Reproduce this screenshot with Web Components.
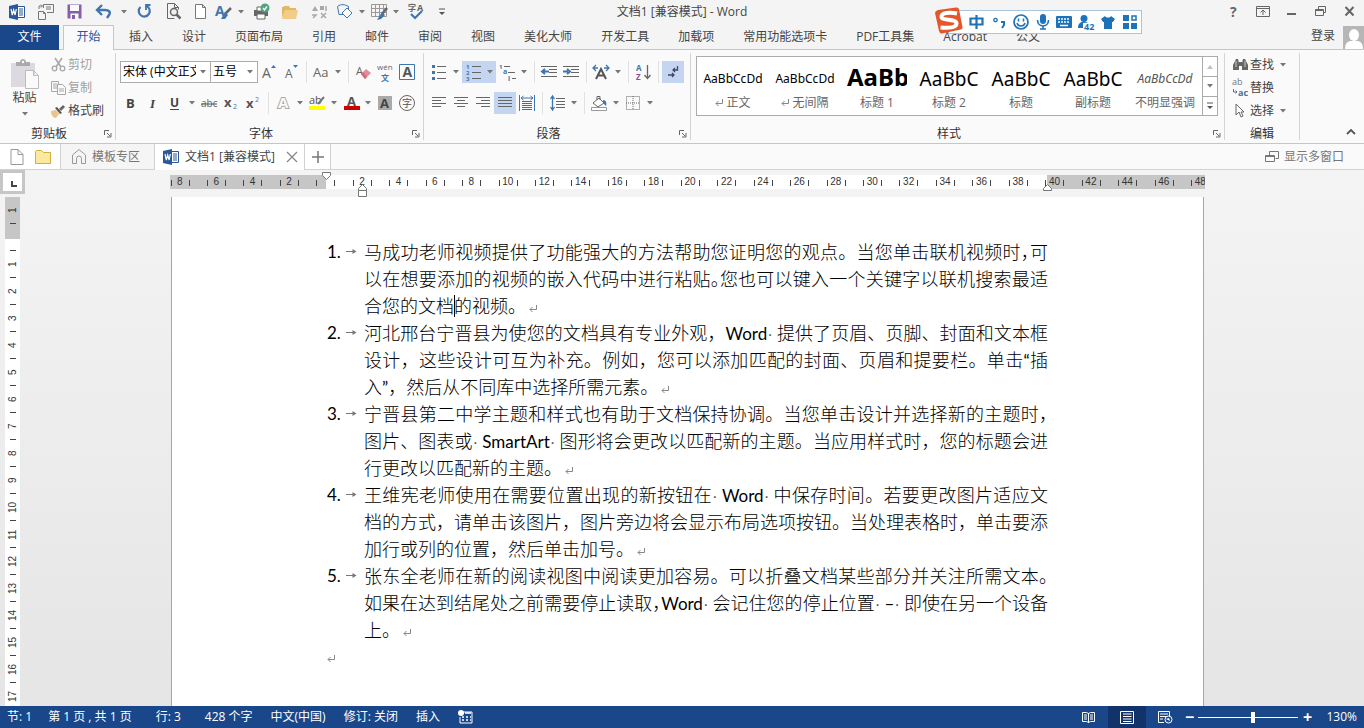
<!DOCTYPE html>
<html lang="zh-CN">
<head>
<meta charset="utf-8">
<title>文档1 [兼容模式] - Word</title>
<style>
html,body{height:100%;margin:0}
body{font:12px/16px "Open Sans","Noto Sans CJK SC",sans-serif;color:#444;background:#f4f4f4;overflow:hidden}
</style>
</head>
<body>
<word-app></word-app>
<script>
const B='#3f76ae',G='#666',L='#a8a8a8';
const lines=(list,c=G)=>list.map(([x,y,w])=>`<path d="M${x} ${y}h${w}" stroke="${c}" fill="none"/>`).join('');
const T=(x,y,s,t,c=G,extra='')=>`<text x="${x}" y="${y}" font-size="${s}" fill="${c}" ${extra}>${t}</text>`;
const bold='font-weight="700"';
const ICONS={
word:[16,16,`<path d="M9 2.500h6.500v11H9" fill="#fff" stroke="#2a579a"/><path d="M10 5h4M10 7h4M10 9h4M10 11h4" stroke="#2a579a"/><path d="M0 2l9-2v16l-9-2z" fill="#2a579a"/><path d="M2 5l1.300 6L4.700 6l1.400 5L7.300 5" fill="none" stroke="#fff" stroke-width="1.200"/>`],
touch:[18,18,`<path d="M1.500 8.500h5l2 2v6h-7zM6.500 8.500v2h2" fill="none" stroke="#777"/><path d="M6.500 5V1.500h10v8H10M9 4h5M9 6h5" fill="none" stroke="#777"/><path d="M2 6V3h3M4 1.500L5.500 3 4 4.500" fill="none" stroke="#777"/>`],
save:[15,15,`<path d="M.5.5h14v14H.5z" fill="#8560a8"/><path d="M3 1h9v6H3z" fill="#f8f8f8"/><path d="M3.500 9.500h8V15h-8z" fill="#f8f8f8"/><path d="M5 11h3v4H5z" fill="#8560a8"/>`],
undo:[16,14,`<path d="M2 5h7c4 0 6 2 4 5l-2 3" fill="none" stroke="${B}" stroke-width="2.400"/><path d="M6 0L1 5l5 5" fill="none" stroke="${B}" stroke-width="2.400"/>`],
redo:[15,15,`<path d="M3.500 3a5.500 5.500 0 1 0 6-1" fill="none" stroke="${B}" stroke-width="2.200"/><path d="M13.500 1H9v5" fill="none" stroke="${B}" stroke-width="1.800"/>`],
preview:[16,17,`<path d="M1.500.5h7l4 4v2M1.500.5v15h7M8.500.5v4h4" fill="none" stroke="${G}"/><circle cx="8" cy="9" r="3.500" fill="#eee" stroke="${G}" stroke-width="1.500"/><path d="M10.500 11.500l4 4" stroke="${G}" stroke-width="2.500"/>`],
page:[12,15,`<path d="M.5.5h7l3 3v11H.5zM7.500.5v3h3" fill="#fff" stroke="#777"/>`],
brushA:[18,17,T(0,13,14,'A',B,bold)+`<path d="M16 5l-6 6" stroke="${G}" stroke-width="2.500"/><path d="M10 9l3 3-3 4-4 0z" fill="${B}"/>`],
printer:[18,17,`<path d="M1 7h14v6H1z" fill="#666"/><path d="M4 4h6v4H4zM4 11h8v5H4z" fill="#fff" stroke="#666"/><circle cx="12" cy="5" r="4.500" fill="#4fa37f"/><path d="M10 5l1.500 2L14 3.500" fill="none" stroke="#fff" stroke-width="1.300"/>`],
folder:[17,14,`<path d="M0 2h1l1-1h5l1 2h6v3H3l-3 7z" fill="#e2b868"/><path d="M3 5h13l-2 9H0z" fill="#f0cd88"/>`],
shapesg:[16,14,`<path d="M0 6l3-5 3 5z" fill="${L}"/><path d="M8 1h4v4H8z" fill="${L}"/><path d="M14 1v5M0 10h4l-3 3M9 8l5 5M14 8l-5 5" fill="none" stroke="${L}" stroke-width="1.500"/>`],
shapes:[17,15,`<path d="M.5 2.500c4-3 7-2 11 0v8H2z" fill="none" stroke="${B}"/><path d="M5 9l5-5 5 5-5 5z" fill="#fff" stroke="${B}"/>`],
grid:[17,16,`<path d="M.5.5h15v12H.5zM.5 4.500h15M.5 8.500h15M4.500.5v12M8.500.5v12M12.500.5v12" fill="none" stroke="#999"/><path d="M16 4l-5 6" stroke="${G}" stroke-width="2.500"/><path d="M11 8l3 3-4 4-4 1z" fill="${B}"/>`],
spell:[17,17,T(0,8,8,'字',G,bold)+T(9,8,9,'A',G,bold)+`<path d="M3 11l4 4 7-7" fill="none" stroke="${B}" stroke-width="2.200"/>`],
more:[8,8,`<path d="M1 1h6" stroke="#555"/><path d="M1 4h6l-3 3z" fill="#555"/>`],
caret:[6,4,`<path d="M0 0h6L3 3.500z" fill="#777"/>`],
caretUp:[6,4,`<path d="M0 4h6L3 0z" fill="#c0c0c0"/>`],
help:[12,14,T(2,12,14,'?','#666',bold)],
opts:[14,12,`<path d="M.5.5h13v10H.5zM.5 2.500h13M7 9V4M4.500 6.500L7 4l2.500 2.500" fill="none" stroke="${G}"/>`],
min:[10,12,`<path d="M0 8h9" stroke="${G}" stroke-width="2"/>`],
restore:[12,11,`<path d="M3.500 3V.5h7v6H9M.5 3.500h8v6h-8zM.5 4.500h8" fill="none" stroke="${G}"/>`],
close:[12,11,`<path d="M1.500 1l8 8.500M9.500 1l-8 8.500" stroke="${G}" stroke-width="2"/>`],
user:[21,23,`<path d="M0 0h21v23H0z" fill="#b6b6b6"/><ellipse cx="11" cy="9" rx="5" ry="6" fill="#fff"/><path d="M2 23c0-6 3-8 6-8h6c3 0 6 2 6 8z" fill="#fff"/>`],
paste:[28,31,`<path d="M0 4h24v24H0z" fill="#ddd9e0"/><path d="M5 7V3h4c0-4 6-4 6 0h4v4z" fill="#aaa"/><circle cx="12" cy="3" r="1.200" fill="#fff"/><path d="M14.500 11.500h8l5 5v13h-13zM22.500 11.500v5h5" fill="#fafafa" stroke="#bbb"/>`],
cut:[15,15,`<path d="M4 1l6 9M11 1L5 10" stroke="${L}" stroke-width="1.600"/><circle cx="3.500" cy="11.500" r="2.300" fill="none" stroke="${L}" stroke-width="1.300"/><circle cx="11.500" cy="11.500" r="2.300" fill="none" stroke="${L}" stroke-width="1.300"/>`],
copy:[15,14,`<path d="M.5.5h7v10h-7zM2 3h4M2 5h4M2 7h4" fill="none" stroke="${L}"/><path d="M6.500 3.500h5l3 3v7h-8z" fill="#fafafa" stroke="${L}"/><path d="M8 8h5M8 10h5" stroke="${L}"/>`],
painter:[16,14,`<path d="M1 7l5-1 3 4-3 4c-3 0-5-3-5-7z" fill="#ecc38a"/><path d="M5 4l5 6 2-1-5-6z" fill="#555"/><path d="M9 5l4-4 2 2-4 4z" fill="${G}"/>`],
grow:[14,14,T(0,13,14,'A')+`<path d="M9 3l2.500-3L14 3z" fill="${B}"/>`],
shrink:[14,14,T(1,13,12,'A')+`<path d="M9 0h5l-2.500 3z" fill="${B}"/>`],
Aa:[16,14,T(0,12,13,'Aa')],
eraser:[15,15,T(0,10,11,'A')+`<path d="M5 9l5-5 5 4-6 6z" fill="#e58b9b"/><path d="M5 9l2-2 4 5-2 2z" fill="#d5687e"/>`],
wen:[16,17,T(0,6,8,'wén')+T(4,17,8,'文',B,bold)],
boxA:[16,16,`<path d="M.5.5h15v15H.5z" fill="none" stroke="${B}"/>`+T(3.5,13,14,'A','#555',bold)],
B:[12,14,T(1,12,13,'B','#444',bold)],
I:[12,14,T(3,12,13,'I','#444','font-style="italic" font-family="Liberation Serif" font-weight="700"')],
U:[12,15,T(1,11,12,'U','#444',bold)+`<path d="M1 13.500h9" stroke="#444"/>`],
abc:[17,14,T(0,11,10,'abc')+`<path d="M0 8h16" stroke="#555"/>`],
sub:[14,14,T(0,11,13,'x','#555',bold)+T(9,13,7,'2',B)],
sup:[14,14,T(0,12,13,'x','#555',bold)+T(9,6,7,'2',B)],
outA:[14,16,T(2,13,15,'A','#fafafa','stroke="#aaa" font-weight="700" paint-order="stroke" stroke-width="2"')],
mark:[18,16,T(1,9,11,'ab','#555')+`<path d="M16 2l-6 7" stroke="#777" stroke-width="2"/><path d="M1 11h16v4H1z" fill="#ffff00"/>`],
colorA:[17,16,T(4,11,13,'A','#555',bold)+`<path d="M1 11h16v4H1z" fill="#d00000"/>`],
shadeA:[14,15,`<path d="M0 0h14v14H0z" fill="#aaa"/>`+T(2,12,13,'A','#444',bold)],
ring:[16,16,`<circle cx="8" cy="8" r="7.500" fill="none" stroke="#666"/>`+T(3,12,10,'字','#555')],
bullets:[14,16,lines([[5,2.5,9],[5,8.5,9],[5,14.5,9]])+`<path d="M0 1h3v3H0zM0 7h3v3H0zM0 13h3v3H0z" fill="${B}"/>`],
numbers:[15,17,lines([[6,2.5,9],[6,8.5,9],[6,14.5,9]])+T(0,5,6,'1',B,bold)+T(0,11,6,'2',B,bold)+T(0,17,6,'3',B,bold)],
multi:[17,17,lines([[5,2.5,6],[9,8.5,7],[13,14.5,4]])+T(0,5,6,'1',B,bold)+T(4,10,7,'a',B,bold)+T(9,17,7,'i',B,bold)],
outdent:[16,12,lines([[0,.5,16],[8,3.5,8],[8,6.5,8],[0,10.500,16]])+`<path d="M8 5.500H2M4 3L1 5.500 4 8" fill="none" stroke="${B}" stroke-width="2"/>`],
indent:[16,12,lines([[0,.5,16],[8,3.5,8],[8,6.5,8],[0,10.500,16]])+`<path d="M0 5.500h5M4 3l3 2.500L4 8" fill="none" stroke="${B}" stroke-width="2"/>`],
wideA:[18,15,`<path d="M4 14L9 4l5 10M6 10.500h6" fill="none" stroke="#555" stroke-width="2"/><path d="M1 3h5M12 3h5M4 0L1 3l3 3M14 0l3 3-3 3" fill="none" stroke="${B}" stroke-width="1.300"/>`],
sort:[15,16,T(0,7,8,'A',B,bold)+T(0,16,8,'Z','#8a4fa0',bold)+`<path d="M11.500 1v13M8.500 11l3 3.500 3-3.500" fill="none" stroke="${G}" stroke-width="1.300"/>`],
marks:[12,14,`<path d="M10.500 1v4H6M8 3L6 5l2 2M1 10h6M5 8l2 2-2 2" fill="none" stroke="#446" stroke-width="1.300"/>`],
left:[15,12,lines([[0,.5,14],[0,3.5,9],[0,6.5,14],[0,9.5,9]])],
center:[15,12,lines([[0,.5,14],[3,3.5,8],[0,6.5,14],[3,9.5,8]])],
right:[15,12,lines([[0,.5,14],[5,3.5,9],[0,6.5,14],[5,9.5,9]])],
just:[15,12,lines([[0,.5,14],[0,3.5,14],[0,6.5,14],[0,9.5,14]])],
dist:[16,16,lines([[3,6.500,10],[3,8.500,10],[3,10.500,10],[3,12.500,10],[3,14.500,10]])+`<path d="M.5 0v16M15.500 0v16M2 3h12M4.500 1L2 3l2.500 2M11.500 1L14 3l-2.500 2" fill="none" stroke="${B}"/>`],
spacing:[15,16,lines([[6,3.500,9],[6,6.5,9],[6,9.5,9],[6,12.500,9]])+`<path d="M2.500 1v14M.5 4l2-3 2 3M.5 12l2 3 2-3" fill="none" stroke="${B}" stroke-width="1.300"/>`],
bucket:[17,16,`<path d="M2 8l6-5 5 5-6 4z" fill="#fff" stroke="${G}"/><path d="M6 5V1.500h3V5" fill="none" stroke="${G}"/><path d="M12 5c3 0 4 3 3 6l-3-3z" fill="${B}"/><path d="M.5 12.500h15v3H.5z" fill="#fff" stroke="#999"/>`],
border:[14,14,`<path d="M.5.5h13v13H.5zM7 0v14M0 7h14" fill="none" stroke="${G}" stroke-dasharray="1 1"/>`],
find:[15,13,`<path d="M1 5l2-4h2l1 4v7H0V7zM9 5l1-4h2l2 4 1 2v5H9z" fill="${G}"/><path d="M6 4h3v4H6z" fill="${G}"/><path d="M3 3v6M12 3v6" stroke="#ccc"/>`],
replace:[17,17,T(0,6,9,'ab','#777')+T(6,17,9,'ac','#4a6f94',bold)+`<path d="M1.500 10v3H5M3.500 11.500L5 13l-1.500 1.500" fill="none" stroke="${B}"/>`],
pointer:[10,15,`<path d="M1 1v11l3-3 2 5 2-1-2-4h3z" fill="#fff" stroke="${G}"/>`],
launch:[8,8,`<path d="M.5 5V.5H5M3 3l3 3M7 3v4H3" fill="none" stroke="${G}"/>`],
up:[10,6,`<path d="M1 5l4-4 4 4" fill="none" stroke="#555" stroke-width="1.800"/>`],
dpage:[14,16,`<path d="M1 .5h7l5 5v10H1zM8 .5v5h5" fill="#fff" stroke="#999"/>`],
dfolder:[17,14,`<path d="M.5 1.500l1-1h5l2 2h7v11H.5z" fill="#fbe9a0" stroke="#d7ad41"/>`],
home:[14,15,`<path d="M.5 6L7 .5 13.500 6v8.500h-4v-5a2.500 2.500 0 0 0-5 0v5h-4z" fill="none" stroke="#999"/>`],
x:[12,12,`<path d="M1 1l10 10M11 1L1 11" stroke="#888" stroke-width="1.300"/>`],
plus:[12,12,`<path d="M6 0v12M0 6h12" stroke="#777" stroke-width="1.500"/>`],
cascade:[14,12,`<path d="M4.500 4V.5h9v7h-3M.5 4.500h9v6h-9zM.5 5.500h9" fill="none" stroke="#777"/>`],
ret:[8,9,`<path d="M7.500 1v4.500H1M3.500 3L1 5.500 3.500 8" fill="none" stroke="#888"/>`],
tab:[11,7,`<path d="M0 3.500h8" stroke="#777"/><path d="M6.500 1l4 2.500-4 2.500z" fill="#777"/>`],
slot:[15,14,`<path d="M4 2h10v11H2V7" fill="none" stroke="#fff"/><circle cx="3" cy="3" r="3" fill="#fff"/><path d="M7 3h6M4 7h2M8 7h2M12 7h1M4 10h2M8 10h2M12 10h1" stroke="#fff" stroke-width="1.500"/>`],
read:[14,13,`<path d="M6.500 2.500l-2-1h-4v9h4l2 1 2-1h4v-9h-4zM6.500 2v10M2 4h3M2 6h3M2 8h3M8 4h3M8 6h3M8 8h3" fill="none" stroke="#fff"/>`],
print:[15,13,`<path d="M.5.5h13v12H.5zM3 3h8.500M3 5.500h8.500M3 8h8.500M3 10.500h8.500" fill="none" stroke="#fff"/>`],
web:[15,13,`<path d="M6 11.500H.5V.5h11V5M2 3h8M2 5.500h6M2 8h3" fill="none" stroke="#fff"/><circle cx="10.500" cy="8.500" r="3.500" fill="#19478a" stroke="#fff"/><path d="M8 8l3-1 1 3z" fill="#fff"/>`],
sogou:[28,27,`<path d="M3 3Q0 4 0 6L4 24Q5 27 7 26.500L26 22.500Q28 22 27.500 20L24 2Q23 0 21 .5z" fill="#e4572b"/><path d="M22 6.500C15 5 6 5.500 6.500 10c.5 4 15 1.500 15 6.500 0 4.500-8 4.500-16 4" fill="none" stroke="#fff" stroke-width="4"/>`],
zhong:[16,16,`<path d="M1.500 4.500h12v6h-12zM7.500 1v14" fill="none" stroke="#1e73b8" stroke-width="2.200"/>`],
punct:[14,14,`<circle cx="3.500" cy="5" r="1.700" fill="none" stroke="#1e73b8" stroke-width="1.300"/><path d="M9 7h3v3l-2 3" fill="none" stroke="#1e73b8" stroke-width="2"/>`],
smile:[16,16,`<circle cx="8" cy="8" r="7" fill="none" stroke="#1e73b8" stroke-width="1.700"/><path d="M5.500 4.500v3M10.500 4.500v3M4 9c1 4 7 4 8 0" fill="none" stroke="#1e73b8" stroke-width="1.500"/>`],
mic:[14,16,`<rect x="4" y="0" width="6" height="10" rx="3" fill="#1e73b8"/><path d="M1.500 6c0 8 11 8 11 0M7 12v3M4 15h6" fill="none" stroke="#1e73b8" stroke-width="1.600"/>`],
keys:[16,12,`<rect width="16" height="12" rx="1" fill="#1e73b8"/><path d="M2 3h12M2 6h12" stroke="#fff" stroke-width="1.500" stroke-dasharray="2 1"/><path d="M4 9.500h8" stroke="#fff" stroke-width="1.500"/>`],
person:[17,15,`<circle cx="6" cy="3.500" r="3.500" fill="#1e73b8"/><path d="M0 13c0-6 4-7 11-5v5z" fill="#1e73b8"/><path d="M5 8h12v7H5z" fill="#fff"/>`+T(6,15,9,'42','#1e73b8',bold)],
shirt:[14,13,`<path d="M0 3l4-3c1 2 5 2 6 0l4 3-2 3h-1v7H3V6H2z" fill="#1e73b8"/>`],
tiles:[14,14,`<path d="M0 0h6v6H0zM0 8h6v6H0zM8 8h6v6H8z" fill="#1e73b8"/><path d="M9 1h4v4H9z" fill="none" stroke="#1e73b8" stroke-width="1.500"/>`]
};
const define=(tag,css,html)=>customElements.define(tag,class extends HTMLElement{
  connectedCallback(){
    if(this.shadowRoot)return;
    const root=this.attachShadow({mode:'open'}),t=document.createElement('template');
    t.innerHTML=`<style>*{box-sizing:border-box}button{font:inherit;color:inherit;background:none;border:0;padding:0;margin:0}${css}</style>`+(typeof html==='function'?html(this):html);
    root.append(t.content.cloneNode(true));
  }
});
const icon=n=>`<w-icon name="${n}"></w-icon>`;

define('w-icon',`:host{display:inline-flex;flex:none}svg{display:block;overflow:visible;font-family:"Open Sans","Noto Sans CJK SC",sans-serif}`,e=>{
  const [w,h,s]=ICONS[e.getAttribute('name')];
  return `<svg width="${w}" height="${h}" viewBox="0 0 ${w} ${h}" aria-hidden="true">${s}</svg>`;
});
define('tool-button',`:host{display:flex;height:22px;flex:none}
button{display:flex;align-items:center;height:100%}
.i{width:var(--cell,22px);display:flex;justify-content:center}.c{width:12px;display:flex;justify-content:center}
:host([active]) button{background:#c3d5f0}`,
  e=>`<button aria-label="${e.getAttribute('icon')}"><span class="i">${icon(e.getAttribute('icon'))}</span>${e.hasAttribute('caret')?`<span class="c">${icon('caret')}</span>`:''}</button>`);
define('label-button',`:host{display:flex;height:23px}button{display:flex;align-items:center}.i{width:18px;display:flex;justify-content:center;margin-right:1px}.c{margin-left:6px;display:flex}:host([dim]){color:#a0a0a0}`,
  e=>`<button><span class="i">${icon(e.getAttribute('icon'))}</span><slot></slot>${e.hasAttribute('caret')?`<span class="c">${icon('caret')}</span>`:''}</button>`);
define('tool-gap',`:host{display:flex;width:8px;height:22px;justify-content:center;flex:none}i{width:1px;background:#e1e1e1}`,'<i></i>');
const tb=(n,o='')=>`<tool-button icon="${n}" ${o}></tool-button>`;
const gap='<tool-gap></tool-gap>';

define('title-bar',`:host{display:flex;height:25px;align-items:center;padding:0 0 2px 2px;position:relative;background:#f4f4f4;--cell:29px}
.q{display:flex;flex:none;align-items:center}.n{--cell:22px}.m{--cell:25px}
h1{position:absolute;left:0;right:0;top:4px;margin:0;text-align:center;font:12px/16px "Open Sans","Noto Sans CJK SC",sans-serif;pointer-events:none}
.w{margin-left:auto;display:flex}`,
`<div class="q">${tb('word')}${tb('touch')}${tb('save')}${tb('undo','caret')}${tb('redo')}${tb('preview')}<div class="q m">${tb('page')}</div><div class="q n">${tb('brushA','caret')}</div>${tb('printer')}${tb('folder')}${tb('shapesg')}<div class="q n">${tb('shapes','caret')}${tb('grid','caret')}</div>${tb('spell')}<div class="q n">${tb('more')}</div></div>
<h1>文档1 [兼容模式] - Word</h1>
<div class="w">${['help','opts','min','restore','close'].map(n=>tb(n)).join('')}</div>`);

define('ribbon-tabs',`:host{display:flex;height:25px;background:#f4f4f4;border-bottom:1px solid #c6c6c6}
nav{display:flex;height:25px}a{color:#444;text-decoration:none;padding:4px 14px 0 15px;white-space:nowrap}
.f{background:#19478a;color:#fff;width:59px;padding:4px 0 0;text-align:center;margin-right:4px}
.on{background:#fafafa;border:1px solid #c6c6c6;border-bottom:0;color:#2a579a;width:51px;padding:3px 0 0;text-align:center}
.u{margin-left:auto;display:flex;padding-top:1px;gap:8px}.u button{height:16px;margin-top:2px}`,
()=>`<nav><a class="f" href="#">文件</a><a class="on" href="#">开始</a>${['插入','设计','页面布局','引用','邮件','审阅','视图','美化大师','开发工具','加载项','常用功能选项卡','PDF工具集','Acrobat','公文'].map(t=>`<a href="#">${t}</a>`).join('')}</nav><div class="u"><button>登录</button>${icon('user')}</div>`);

define('ribbon-group',`:host{display:flex;flex-direction:column;position:relative;border-right:1px solid #d4d4d4;height:87px;margin-top:3px}
.b{height:73px;flex:none}footer{text-align:center;color:#333;line-height:16px;height:16px;padding-right:17px}:host([plain]) footer{padding:0}.l{position:absolute;right:3px;bottom:-2px}`,
e=>`<div class="b"><slot></slot></div><footer>${e.getAttribute('label')}</footer>${e.hasAttribute('plain')?'':`<button class="l" aria-label="${e.getAttribute('label')}">${icon('launch')}</button>`}`);

define('style-tile',`:host{display:block;width:72px;flex:none}button{width:100%;height:100%;text-align:center}
.p{display:block;height:34px;line-height:38px;width:60px;margin:0 auto;overflow:hidden;white-space:nowrap;color:#000;font-family:"Noto Sans",sans-serif}
.s{font-size:12px}.m{font-size:19px;line-height:36px}.l{font-size:24px;font-weight:700;line-height:32px}.i{font-size:12px;font-style:italic;line-height:36px;color:#555}.s{line-height:36px}
.n{display:block;line-height:16px;color:#666;white-space:nowrap}`,
e=>`<button><span class="p ${e.getAttribute('kind')}">${e.getAttribute('sample')}</span><span class="n">${e.hasAttribute('mark')?icon('ret')+' ':''}<slot></slot></span></button>`);

define('ribbon-bar',`:host{display:flex;height:94px;background:#fafafa;border-bottom:1px solid #c6c6c6;position:relative}
.row{display:flex;align-items:center;height:22px}.rows{display:flex;flex-direction:column;gap:9px;padding:8px 0 0 4px}
.clip{width:116px}.font{width:308px}.para{width:267px}.sty{flex:1;min-width:0}.edit{width:75px}
.c{display:flex}.big{width:49px;height:70px;display:flex;flex-direction:column;align-items:center;padding-top:6px}.big span{line-height:16px}.big w-icon:last-child{margin-top:6px}
.sel{position:relative;display:flex}.sel select{appearance:none;font:12px/18px "Open Sans","Noto Sans CJK SC",sans-serif;color:#000;border:1px solid #ababab;border-radius:0;background:#fff;height:22px;padding:0 14px 0 2px;margin:0;width:100%;text-overflow:clip}
.a{width:91px}.z{width:48px;margin:0 0 0 -1px}.sel w-icon{position:absolute;right:5px;top:9px;pointer-events:none}
.gal{display:flex;border:1px solid #ababab;background:#fff;margin:3px 6px 0 5px;height:60px}.tiles{display:flex;flex:1;min-width:0;overflow:hidden}
.scroll{width:15px;display:grid;grid-template-rows:1fr 1fr 1fr;border-left:1px solid #ababab}.scroll button{display:flex;align-items:center;justify-content:center}.scroll button+button{border-top:1px solid #ababab}
.up{position:absolute;right:8px;bottom:4px}.e{padding-left:6px}`,
`<ribbon-group class="clip" label="剪贴板"><div class="c"><button class="big">${icon('paste')}<span>粘贴</span>${icon('caret')}</button><div><label-button icon="cut" dim>剪切</label-button><label-button icon="copy" dim>复制</label-button><label-button icon="painter">格式刷</label-button></div></div></ribbon-group>
<ribbon-group class="font" label="字体"><div class="rows"><div class="row"><span class="sel a"><select aria-label="字体"><option>宋体 (中文正文)</option></select>${icon('caret')}</span><span class="sel z"><select aria-label="字号"><option>五号</option></select>${icon('caret')}</span>${tb('grow')}${tb('shrink')}${gap}${tb('Aa','caret')}${gap}${tb('eraser')}${tb('wen')}${tb('boxA')}</div>
<div class="row">${tb('B')}${tb('I')}${tb('U','caret')}${tb('abc')}${tb('sub')}${tb('sup')}${gap}${tb('outA','caret')}${tb('mark','caret')}${tb('colorA','caret')}${tb('shadeA')}${tb('ring')}</div></div></ribbon-group>
<ribbon-group class="para" label="段落"><div class="rows"><div class="row">${tb('bullets','caret')}${tb('numbers','caret active')}${tb('multi','caret')}${gap}${tb('outdent')}${tb('indent')}${gap}${tb('wideA','caret')}${gap}${tb('sort')}${gap}${tb('marks','active')}</div>
<div class="row">${tb('left')}${tb('center')}${tb('right')}${tb('just','active')}${tb('dist')}${gap}${tb('spacing','caret')}${gap}${tb('bucket','caret')}${tb('border','caret')}</div></div></ribbon-group>
<ribbon-group class="sty" label="样式"><div class="gal"><div class="tiles"><style-tile kind="s" sample="AaBbCcDd" mark>正文</style-tile><style-tile kind="s" sample="AaBbCcDd" mark>无间隔</style-tile><style-tile kind="l" sample="AaBb">标题 1</style-tile><style-tile kind="m" sample="AaBbC">标题 2</style-tile><style-tile kind="m" sample="AaBbC">标题</style-tile><style-tile kind="m" sample="AaBbC">副标题</style-tile><style-tile kind="i" sample="AaBbCcDd">不明显强调</style-tile></div><div class="scroll"><button aria-label="上">${icon('caretUp')}</button><button aria-label="下">${icon('caret')}</button><button aria-label="更多">${icon('more')}</button></div></div></ribbon-group>
<ribbon-group class="edit" label="编辑" plain><div class="e"><label-button icon="find" caret>查找</label-button><label-button icon="replace">替换</label-button><label-button icon="pointer" caret>选择</label-button></div></ribbon-group>
<div style="width:64px"></div><button class="up" aria-label="折叠">${icon('up')}</button>`);

define('doc-tabs',`:host{display:flex;height:26px;background:#fafafa;border-bottom:1px solid #d2d2d2}
.n,.h,.a,.p,.m{display:flex;align-items:center;height:25px;border-right:1px solid #d2d2d2}
.n{width:61px;background:#fff;padding-left:10px;gap:11px}.h{width:94px;background:#f5f5f5;padding-left:11px;gap:6px;color:#777}
.a{width:150px;background:#fff;height:26px;padding-left:8px;gap:6px;white-space:nowrap}.a button{margin-left:auto;margin-right:6px;display:flex}.p{width:26px;background:#fff;justify-content:center}.m{border:0;margin-left:auto;padding-right:20px;gap:5px;color:#777}`,
`<div class="n">${icon('dpage')}${icon('dfolder')}</div><button class="h">${icon('home')}<span>模板专区</span></button><div class="a">${icon('word')}<span>文档1 [兼容模式]</span><button aria-label="关闭">${icon('x')}</button></div><button class="p" aria-label="新建">${icon('plus')}</button><button class="m">${icon('cascade')}<span>显示多窗口</span></button>`);

const hcells=Array.from({length:29},(_,i)=>`<span>${i===4?'':Math.abs(i*2-8)}</span>`).join('');
define('h-ruler',`:host{display:block;width:100%;max-width:1035px;height:27px;position:relative}
.clip{height:14px;overflow:hidden;margin-top:5px;background:linear-gradient(90deg,#c6c6c6 156px,#fff 156px 877px,#c6c6c6 877px);display:flex;justify-content:center}
.g{display:grid;grid-template-columns:repeat(29,1fr);width:1057px;flex:none;margin-left:6px}
span{font:10px/14px "Liberation Sans",sans-serif;color:#333;text-align:center;background:linear-gradient(#444,#444) 9px 5px/1px 6px no-repeat,linear-gradient(#444,#444) 27px 5px/1px 6px no-repeat}
svg{position:absolute;top:5px;overflow:visible}.f{top:2px;left:152px}.l{left:188px}.r{left:873px}`,
`<div class="clip"><div class="g">${hcells}</div></div>
<svg class="f" width="10" height="8"><path d="M.5.5h8v3L4.500 7.500.5 3.500z" fill="#fff" stroke="#777"/></svg>
<svg class="l" width="10" height="24"><path d="M.5 15.500v-2L4.500 9.500l4 4v2z" fill="none" stroke="#777"/><path d="M.5 15.500h8v6h-8z" fill="#fff" stroke="#777"/></svg>
<svg class="r" width="10" height="24"><path d="M.5 15.500v-2L4.500 9.500l4 4v2z" fill="#fff" stroke="#777"/></svg>`);

define('v-ruler',`:host{display:block;width:15px;margin-left:5px;background:linear-gradient(#c6c6c6 42px,#fff 42px);overflow:hidden}
span{display:flex;width:15px;height:27px;justify-content:center;align-items:center;font:10px/14px "Liberation Sans",sans-serif;color:#333;writing-mode:vertical-rl;rotate:180deg;background:linear-gradient(#444,#444) 4px 0/6px 1px no-repeat}`,
()=>Array.from({length:19},(_,i)=>`<span>${i===1?'':Math.abs(i-1)}</span>`).join(''));

define('doc-item',`:host{display:grid;grid-template-columns:37px minmax(0,1fr);font:18px/27px "Noto Sans CJK SC",sans-serif;color:#000}
.n{display:flex;align-items:center;justify-content:space-between;height:27px;padding-right:7px;font:17px/27px "Lato","Noto Sans CJK SC",sans-serif}`,
e=>`<span class="n">${e.getAttribute('n')}.${icon('tab')}</span><div><slot></slot></div>`);
define('doc-line',`:host{display:block;height:27px;white-space:nowrap;text-align:justify;text-align-last:justify;font-family:"Noto Sans CJK SC",sans-serif;font-weight:300}
:host([end]){text-align-last:left}w-icon{margin-left:3px}`,
e=>`<slot></slot>${e.hasAttribute('end')?icon('ret'):''}`);

const W=s=>`<span class="w">${s}</span>`, dot='<span class="d">·</span>', H=s=>`<span class="h">${s}</span>`;
const DOC=[
[`马成功老师视频提供了功能强大的方法帮助您证明您的观点。当您单击联机视频时${H('，')}可`,`以在想要添加的视频的嵌入代码中进行粘贴${H('。')}您也可以键入一个关键字以联机搜索最适`,'合您的文档<i class="cur"></i>的视频。'],
[`河北邢台宁晋县为使您的文档具有专业外观，${W('Word')}${dot} 提供了页眉、页脚、封面和文本框`,`设计，这些设计可互为补充。例如，您可以添加匹配的封面、页眉和提要栏。单击${W('“')}插`,`入${W('”')}，然后从不同库中选择所需元素。`],
[`宁晋县第二中学主题和样式也有助于文档保持协调。当您单击设计并选择新的主题时${H('，')}`,`图片、图表或${dot} ${W('SmartArt')}${dot} 图形将会更改以匹配新的主题。当应用样式时，您的标题会进`,'行更改以匹配新的主题。'],
[`王维宪老师使用在需要位置出现的新按钮在${dot} ${W('Word')}${dot} 中保存时间。若要更改图片适应文`,'档的方式，请单击该图片，图片旁边将会显示布局选项按钮。当处理表格时，单击要添','加行或列的位置，然后单击加号。'],
[`张东全老师在新的阅读视图中阅读更加容易。可以折叠文档某些部分并关注所需文本${H('。')}`,`如果在达到结尾处之前需要停止读取${H('，')}${W('Word')}${dot} 会记住您的停止位置${dot} ${W('–')}${dot} 即使在另一个设备`,'上。']];
define('doc-page',`:host{display:block;width:100%;max-width:1033px;background:#fff;border:solid #a6a6a6;border-width:0 1px;padding:41px 155px 0}
.w{font-family:"Lato",sans-serif;font-size:17px;font-weight:400}.d{color:#555;font-family:"Liberation Sans";font-size:17px}.h{font-feature-settings:"halt"}.cur{display:inline-block;width:1px;height:22px;background:#000;vertical-align:-4px;margin-right:-1px}
.e{height:31px;display:flex;align-items:center}`,
()=>DOC.map((p,i)=>`<doc-item n="${i+1}">${p.map((t,j)=>`<doc-line ${j===2?'end':''}>${t}</doc-line>`).join('')}</doc-item>`).join('')+`<div class="e">${icon('ret')}</div>`);

define('work-area',`:host{display:grid;grid-template-columns:24px minmax(0,1fr);grid-template-rows:27px minmax(0,1fr);flex:1;min-height:0;overflow:hidden;background:linear-gradient(#f4f4f4,#e5e5e5)}
.k{width:25px;height:24px;border:3px solid #c6c6c6;background:#fff;display:flex;align-items:center;justify-content:center}.k i{width:6px;height:6px;border:solid #444;border-width:0 0 2px 2px;margin:4px 0 0 2px}
.t,.p{display:flex;justify-content:center;padding-right:13px}.t{padding-right:14px;position:relative;z-index:1}.p{min-height:0}`,
`<div class="k"><i></i></div><div class="t"><h-ruler></h-ruler></div><v-ruler></v-ruler><div class="p"><doc-page></doc-page></div>`);

define('status-bar',`:host{display:flex;height:22px;background:#19478a;color:#fff;align-items:center;white-space:nowrap;padding:0 7px}
.s{display:flex;align-items:center}.s span{margin-right:18px}.s .f{margin-right:16px}.s .g,.s .p{margin-right:24px}
.v{margin-left:auto;display:flex;align-items:center;height:22px}.v tool-button{--cell:38px}.on{background:#12336a}
.z{display:flex;align-items:center;gap:4px}.z button{width:10px;font:700 16px/16px "Open Sans",sans-serif}
input{appearance:none;width:100px;height:22px;margin:0;background:linear-gradient(#fff,#fff) center/100% 1px no-repeat}
input::-webkit-slider-thumb{appearance:none;width:4px;height:11px;background:#fff}.pc{margin-left:14px}`,
`<div class="s"><span class="f">节: 1</span><span class="p">第 1 页 , 共 1 页</span><span class="g">行: 3</span><span>428 个字</span><span>中文(中国)</span><span>修订: 关闭</span><span>插入</span>${icon('slot')}</div>
<div class="v">${tb('read')}<div class="on">${tb('print')}</div>${tb('web')}<div class="z"><button>−</button><input type="range" min="10" max="230" value="130" aria-label="缩放"><button>+</button></div><span class="pc">130%</span></div>`);

define('ime-bar',`:host{position:absolute;top:10px;right:222px;width:194px;height:24px;background:#fff;border:1px solid #a9c4dd;display:flex;align-items:center;padding-left:17px;z-index:2}
.i{width:22px;display:flex;justify-content:center}.logo{position:absolute;left:-14px;top:-4px}`,
`<span class="logo">${icon('sogou')}</span>${['zhong','punct','smile','mic','keys','person','shirt','tiles'].map(n=>`<span class="i">${icon(n)}</span>`).join('')}`);

define('word-app',`:host{display:flex;flex-direction:column;height:100vh;position:relative}`,
`<title-bar></title-bar><ribbon-tabs></ribbon-tabs><ribbon-bar></ribbon-bar><doc-tabs></doc-tabs><work-area></work-area><status-bar></status-bar><ime-bar></ime-bar>`);
</script>
</body>
</html>
